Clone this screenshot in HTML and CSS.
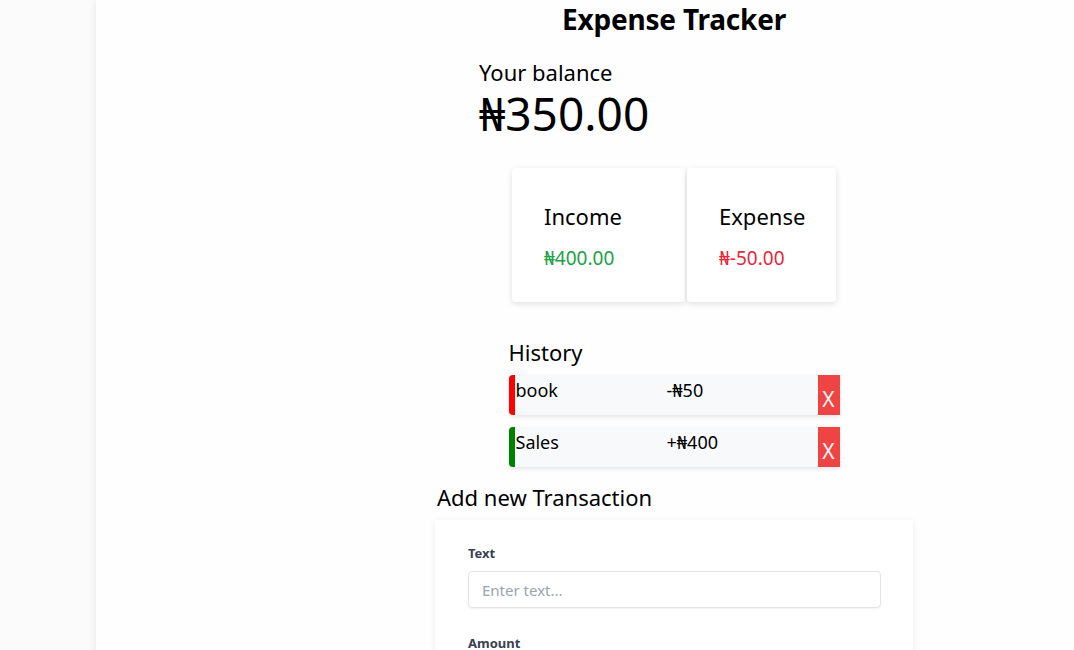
FILE: index.html
```html
<!DOCTYPE html>
<html lang="en">
<head>
<meta charset="utf-8">
<title>Expense Tracker</title>
<link rel="stylesheet" href="styles.css">
</head>
<body>
<div class="page">
  <h1 class="title">Expense Tracker</h1>
  <section class="balance">
    <h4 class="balance-label">Your balance</h4>
    <div class="balance-amount">₦350.00</div>
  </section>
  <section class="summary">
    <div class="card card-income">
      <h4 class="card-title">Income</h4>
      <p class="money plus">₦400.00</p>
    </div>
    <div class="card card-expense">
      <h4 class="card-title">Expense</h4>
      <p class="money minus">₦-50.00</p>
    </div>
  </section>
  <section class="history">
    <h3 class="section-title">History</h3>
    <ul class="list">
      <li class="item item-minus">
        <span class="item-text">book</span>
        <span class="item-amount">-₦50</span>
        <button class="delete">X</button>
      </li>
      <li class="item item-plus">
        <span class="item-text">Sales</span>
        <span class="item-amount">+₦400</span>
        <button class="delete">X</button>
      </li>
    </ul>
  </section>
  <section class="add">
    <h3 class="add-title">Add new Transaction</h3>
    <form class="form-card">
      <div class="field">
        <label class="label">Text</label>
        <input class="input" type="text" placeholder="Enter text...">
      </div>
      <div class="field">
        <label class="label">Amount</label>
        <input class="input" type="number" placeholder="Enter amount...">
      </div>
    </form>
  </section>
</div>
</body>
</html>
```

FILE: styles.css
```css
html, body {
  margin: 0;
  padding: 0;
}
body {
  background: #fbfbfb;
  overflow: hidden;
  height: 650px;
  font-family: "Noto Sans", "DejaVu Sans", sans-serif;
  color: #000;
}
.page {
  margin-left: 96px;
  width: 1156px;
  min-height: 900px;
  background: #fefefe;
  box-shadow: 0 0 8px rgba(0, 0, 0, 0.09);
  display: flex;
  flex-direction: column;
  align-items: center;
}
.title {
  margin: 0;
  font-size: 28px;
  line-height: 38px;
  font-weight: 700;
  letter-spacing: -0.2px;
}
.balance {
  width: 390px;
  margin-top: 20px;
}
.balance-label {
  margin: 0;
  font-size: 22px;
  font-weight: 400;
  line-height: 28px;
}
.balance-amount {
  font-size: 46px;
  line-height: 52px;
  margin-top: 1px;
}
.summary {
  display: flex;
  gap: 2px;
  margin-top: 29px;
}
.card {
  background: #fff;
  border-radius: 4px;
  box-shadow: 0 2px 6px rgba(0, 0, 0, 0.12);
  height: 134px;
  box-sizing: border-box;
  padding: 33px 32px 0;
}
.card-income { width: 173px; }
.card-expense { width: 149px; }
.card-title {
  margin: 0;
  font-size: 22px;
  font-weight: 400;
  line-height: 30px;
}
.money {
  margin: 16px 0 0;
  font-size: 19px;
  line-height: 22px;
}
.plus { color: #22a046; }
.minus { color: #e5293b; }
.history {
  width: 331px;
  margin-top: 36px;
}
.section-title {
  margin: 0 0 9px;
  font-size: 22px;
  font-weight: 400;
  line-height: 28px;
}
.list {
  list-style: none;
  margin: 0;
  padding: 0;
  display: flex;
  flex-direction: column;
  gap: 12px;
}
.item {
  display: flex;
  height: 40px;
  background: #f8f9fb;
  border-left: 6px solid;
  border-radius: 4px 0 0 4px;
  box-shadow: 0 2px 4px rgba(0, 0, 0, 0.1);
  font-size: 18px;
  line-height: 30px;
}
.item-minus { border-left-color: #ff0000; }
.item-plus { border-left-color: #008000; }
.item-text {
  flex: 0 0 151px;
  padding-left: 1px;
}
.item-amount {
  flex: 1;
}
.delete {
  width: 22px;
  border: 0;
  padding: 0;
  margin: 0;
  background: #ef4444;
  color: #f3f4f6;
  font-family: "Noto Sans", sans-serif;
  font-size: 21px;
  line-height: 40px;
  padding-top: 4px;
}
.add {
  width: 478px;
  margin-top: 16px;
}
.add-title {
  margin: 0 0 0 2px;
  font-size: 22px;
  font-weight: 400;
  line-height: 28px;
}
.form-card {
  margin-top: 9px;
  background: #fff;
  box-shadow: 0 1px 6px rgba(0, 0, 0, 0.07);
  padding: 24px 32px 30px 33px;
  display: flex;
  flex-direction: column;
  gap: 26px;
}
.label {
  display: block;
  font-size: 13px;
  font-weight: 700;
  color: #374151;
  line-height: 18px;
  margin-bottom: 9px;
}
.input {
  display: block;
  width: 100%;
  box-sizing: border-box;
  height: 37px;
  border: 1px solid #e2e4e8;
  border-radius: 4px;
  box-shadow: 0 1px 2px rgba(0, 0, 0, 0.06);
  padding: 0 13px;
  font-family: "Noto Sans", sans-serif;
  font-size: 15px;
  color: #111;
  background: #fff;
}
.input::placeholder {
  color: #9ca3af;
}
```
